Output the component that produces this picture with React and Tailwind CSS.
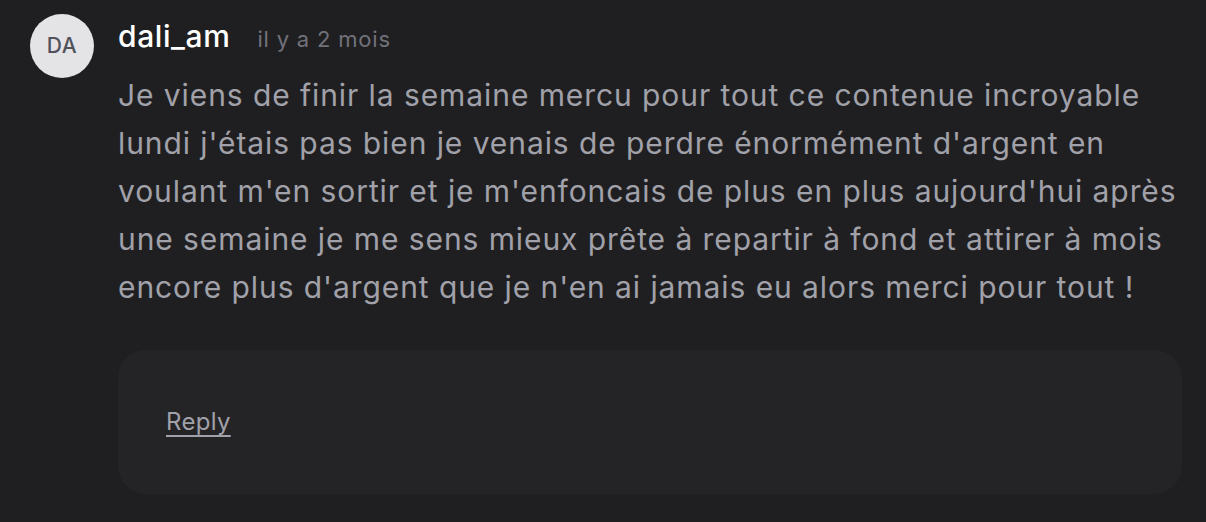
export default function App() {
  return (
    <div
      className="min-h-screen w-full bg-[#1f1f21] pl-[30px] pr-6 pt-[14px] pb-7"
      style={{ fontFamily: 'Inter, "Noto Sans", sans-serif' }}
    >
      <div className="flex gap-6">
        <div className="flex h-16 w-16 shrink-0 items-center justify-center rounded-full bg-[#e4e4e7] text-[21px] font-medium tracking-[0.5px] text-[#52525b]">
          DA
        </div>
        <div className="flex min-w-0 flex-1 flex-col">
          <div className="flex h-[57px] items-baseline gap-[27px] pt-[2px]">
            <span className="text-[30px] font-medium leading-[40px] tracking-[0.6px] text-white">dali_am</span>
            <span className="text-[22px] tracking-[0.8px] text-[#71717a]">il y a 2 mois</span>
          </div>
          <p className="text-[30px] leading-[48px] tracking-[0.92px] text-[#a1a1aa]">
            Je viens de finir la semaine mercu pour tout ce contenue incroyable lundi j'étais pas bien je venais de perdre énormément d'argent en voulant m'en sortir et je m'enfoncais de plus en plus aujourd'hui après une semaine je me sens mieux prête à repartir à fond et attirer à mois encore plus d'argent que je n'en ai jamais eu alors merci pour tout !
          </p>
          <div className="mt-[39px] flex h-[144px] items-center rounded-[28px] bg-[#242426] px-12">
            <button className="text-[24px] tracking-[0.3px] text-[#a1a1aa] underline underline-offset-[5px]">Reply</button>
          </div>
        </div>
      </div>
    </div>
  );
}
